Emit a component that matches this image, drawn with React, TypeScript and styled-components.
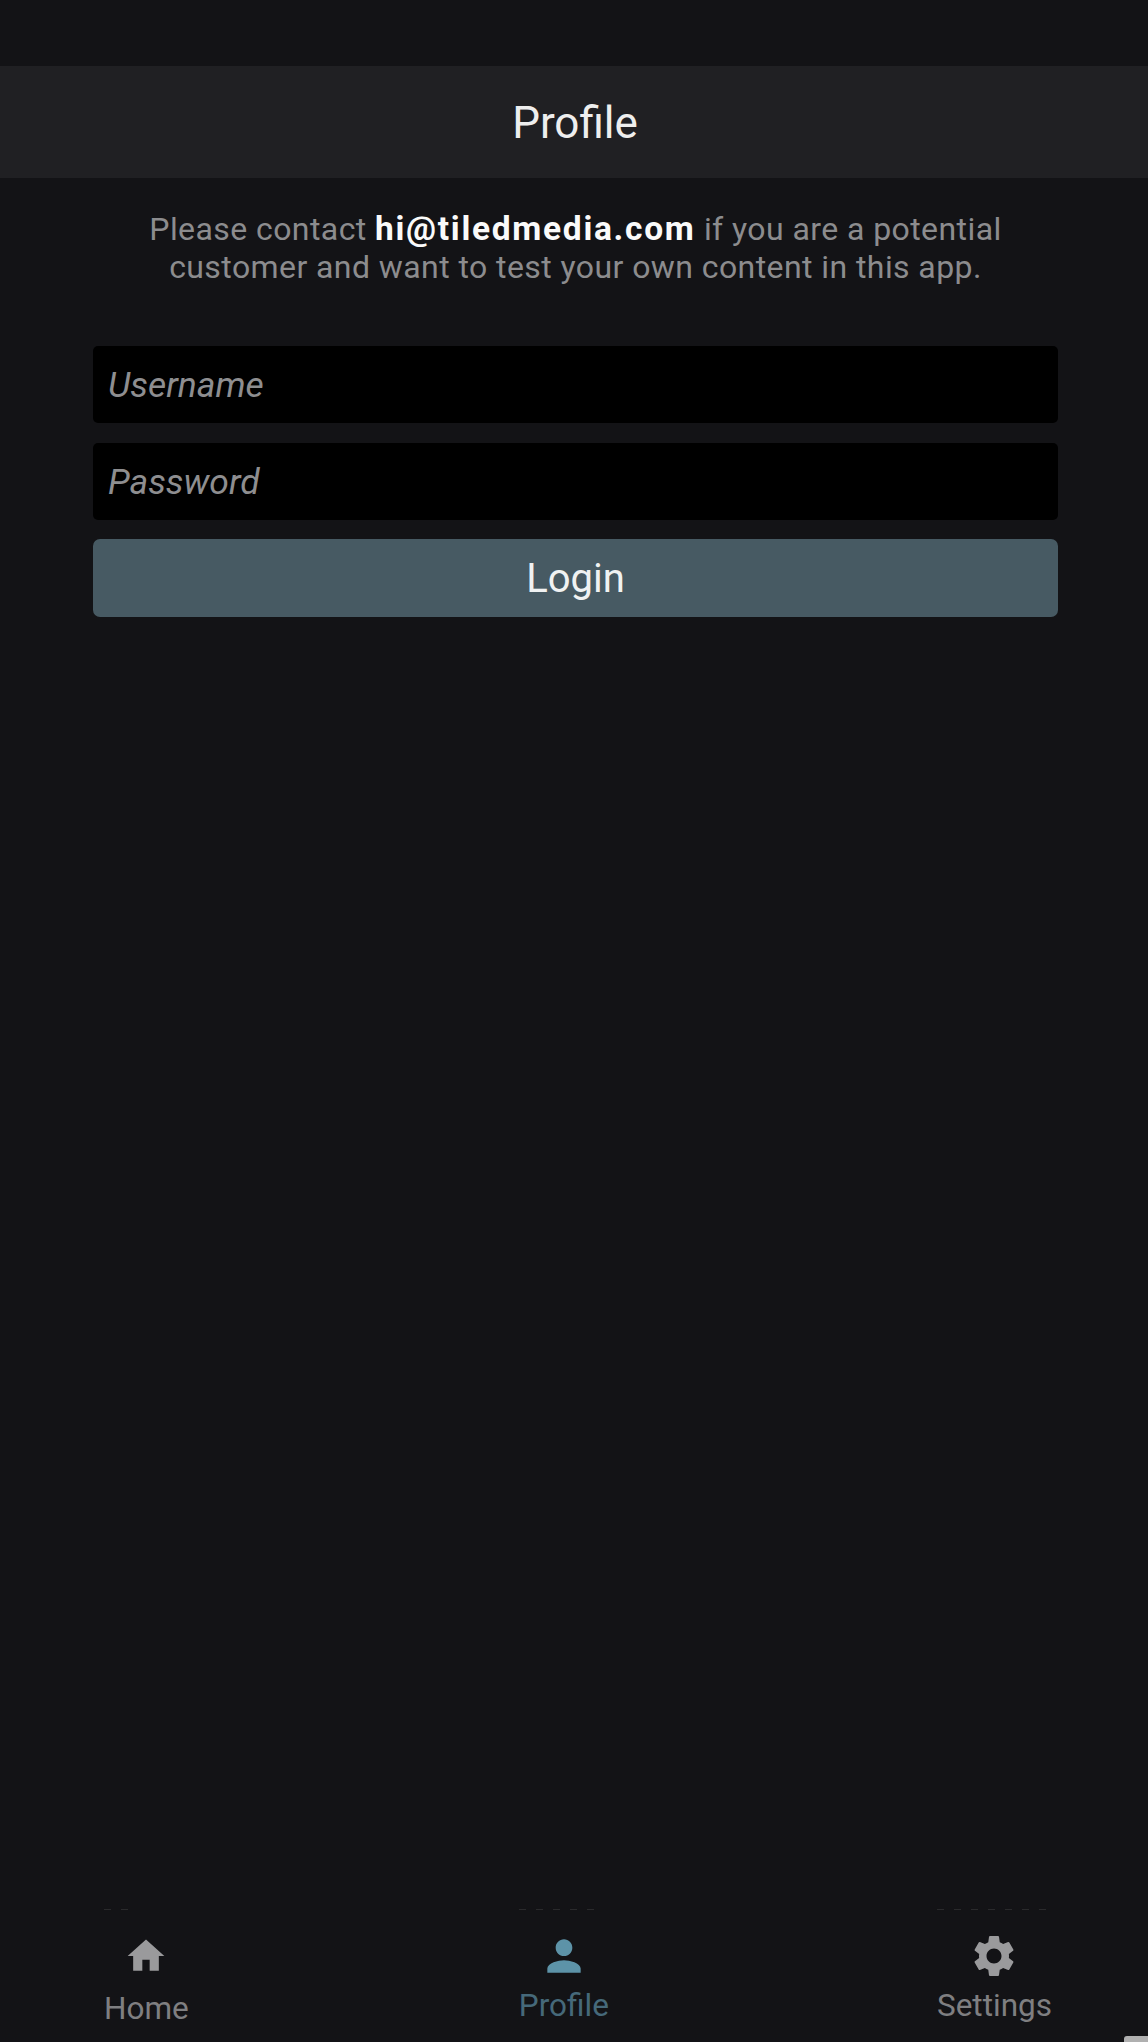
import React from "react";
import styled, { createGlobalStyle } from "styled-components";

const Global = createGlobalStyle`
  html, body { margin: 0; padding: 0; background: #131316; }
  * { box-sizing: border-box; }
  input::placeholder { color: #8e8e90; opacity: 1; }
`;

const Screen = styled.div`
  position: relative;
  width: 1148px;
  height: 2042px;
  display: flex;
  flex-direction: column;
  background: #131316;
  font-family: Roboto, "Liberation Sans", sans-serif;
  overflow: hidden;
`;

const Header = styled.header`
  margin-top: 66px;
  height: 112px;
  flex: none;
  display: flex;
  align-items: center;
  justify-content: center;
  padding: 2px 0 0 2px;
  background: #202023;
  color: #eeeeee;
  font-size: 44px;
  font-weight: 400;
`;

const Notice = styled.p`
  margin: 32px 0 0;
  padding-left: 3px;
  text-align: center;
  color: #8c8c8e;
  font-size: 32px;
  line-height: 38px;
  letter-spacing: 0.42px;
`;

const Email = styled.strong`
  color: #fafafa;
  font-size: 33.5px;
  line-height: 1;
  font-weight: 700;
  letter-spacing: 1.7px;
`;

const Form = styled.form`
  margin: 60px 90px 0 93px;
  display: flex;
  flex-direction: column;
`;

const Field = styled.input<{ $gap: number }>`
  height: 77px;
  margin-bottom: ${(p) => p.$gap}px;
  padding: 0 15px;
  border: none;
  border-radius: 5px;
  background: #000;
  color: #8e8e90;
  font-family: inherit;
  font-size: 35.4px;
  font-style: italic;
  outline: none;
`;

const Submit = styled.button`
  height: 78px;
  margin-top: 1px;
  border: none;
  border-radius: 7px;
  background: #475a63;
  color: #f0f2f2;
  font-family: inherit;
  font-size: 40px;
  font-weight: 400;
`;

const Spacer = styled.div`
  flex: 1;
`;

const Nav = styled.nav`
  flex: none;
  height: 108px;
  display: flex;
  justify-content: space-between;
  padding: 0 96px 0 104px;
`;

const Tab = styled.div<{ $active?: boolean; $drop: number; $lift: number; $nudge?: number }>`
  position: relative;
  display: flex;
  flex-direction: column;
  align-items: center;
  margin-top: ${(p) => p.$lift}px;
  margin-left: ${(p) => p.$nudge ?? 0}px;
  color: ${(p) => (p.$active ? "#46697a" : "#7f7f81")};
  font-size: 31.5px;
  line-height: 38px;
  svg {
    display: block;
    color: ${(p) => (p.$active ? "#5d93a8" : "#9a9a9c")};
    margin-bottom: ${(p) => p.$drop}px;
  }
`;

const Clipped = styled.span<{ $width: number; $top: number }>`
  position: absolute;
  left: 0;
  top: ${(p) => p.$top}px;
  width: ${(p) => p.$width}px;
  height: 1px;
  background: repeating-linear-gradient(90deg, #2a2a2c 0 7px, transparent 7px 17px);
`;

const Corner = styled.div`
  position: absolute;
  right: 0;
  bottom: 0;
  width: 24px;
  height: 6px;
  background: #b0b0b0;
  border-radius: 3px 0 0 0;
`;

const HomeIcon = () => (
  <svg width="44" height="44" viewBox="0 0 24 24" fill="currentColor">
    <path d="M10 20v-6h4v6h5v-8h3L12 3 2 12h3v8z" />
  </svg>
);

const PersonIcon = () => (
  <svg width="50" height="50" viewBox="0 0 24 24" fill="currentColor">
    <path d="M12 12c2.21 0 4-1.79 4-4s-1.79-4-4-4-4 1.79-4 4 1.79 4 4 4zm0 2c-2.67 0-8 1.34-8 4v2h16v-2c0-2.66-5.33-4-8-4z" />
  </svg>
);

const GearIcon = () => (
  <svg width="50" height="50" viewBox="0 0 24 24" fill="currentColor">
    <path d="M19.14 12.94c.04-.3.06-.61.06-.94 0-.32-.02-.64-.07-.94l2.03-1.58a.49.49 0 0 0 .12-.61l-1.92-3.32a.488.488 0 0 0-.59-.22l-2.39.96c-.5-.38-1.03-.7-1.62-.94l-.36-2.54a.484.484 0 0 0-.48-.41h-3.84c-.24 0-.43.17-.47.41l-.36 2.54c-.59.24-1.13.57-1.62.94l-2.39-.96c-.22-.08-.47 0-.59.22L2.74 8.87c-.12.21-.08.47.12.61l2.03 1.58c-.05.3-.09.63-.09.94s.02.64.07.94l-2.03 1.58a.49.49 0 0 0-.12.61l1.92 3.32c.12.22.37.29.59.22l2.39-.96c.5.38 1.03.7 1.62.94l.36 2.54c.05.24.24.41.48.41h3.84c.24 0 .44-.17.47-.41l.36-2.54c.59-.24 1.13-.56 1.62-.94l2.39.96c.22.08.47 0 .59-.22l1.92-3.32c.12-.22.07-.47-.12-.61l-2.01-1.58zM12 15.6c-1.98 0-3.6-1.62-3.6-3.6s1.62-3.6 3.6-3.6 3.6 1.62 3.6 3.6-1.62 3.6-3.6 3.6z" />
  </svg>
);

export default function App() {
  return (
    <Screen>
      <Global />
      <Header>Profile</Header>
      <Notice>
        Please contact <Email>hi@tiledmedia.com</Email> if you are a potential
        <br />
        customer and want to test your own content in this app.
      </Notice>
      <Form>
        <Field $gap={20} placeholder="Username" />
        <Field $gap={18} placeholder="Password" />
        <Submit type="button">Login</Submit>
      </Form>
      <Spacer />
      <Nav>
        <Tab $drop={12} $lift={0}>
          <Clipped $width={24} $top={-25} />
          <HomeIcon />
          Home
        </Tab>
        <Tab $active $drop={6} $lift={-3} $nudge={2}>
          <Clipped $width={85} $top={-22} />
          <PersonIcon />
          Profile
        </Tab>
        <Tab $drop={6} $lift={-3}>
          <Clipped $width={110} $top={-22} />
          <GearIcon />
          Settings
        </Tab>
      </Nav>
      <Corner />
    </Screen>
  );
}
